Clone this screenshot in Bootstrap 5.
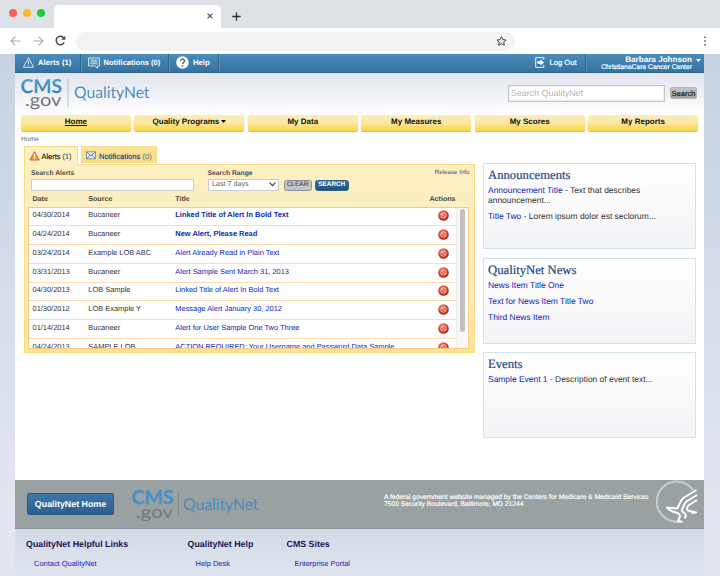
<!DOCTYPE html>
<html lang="en">
<head>
<meta charset="utf-8">
<meta name="viewport" content="width=device-width, initial-scale=1">
<title>QualityNet</title>
<link href="https://cdn.jsdelivr.net/npm/bootstrap@5.3.0/dist/css/bootstrap.min.css" rel="stylesheet">
<style>
html,body{height:576px;overflow:hidden}
body{font-family:"Liberation Sans",Arial,sans-serif;font-size:7.45px;line-height:1.2;color:#333;background:#dee1e6;text-rendering:geometricPrecision}
a{color:#0b27b8;text-decoration:none}
.tabstrip{height:28px;background:#dee1e6;padding:5px 0 0 9px}
.light{width:8.4px;height:8.4px;border-radius:50%;margin-right:5.5px}
.browser-tab{width:167px;height:23px;border-radius:5px 5px 0 0;margin-left:3.5px;padding-right:8px}
.toolbar{height:26px;padding:0 10px}
.omnibox{width:439px;height:19px;border-radius:10px;background:#f1f3f4;margin-left:10px;padding-right:8px}
.backdrop{height:522px;padding:0 16px 0 15px;background:linear-gradient(#c8d3e1,#d0dae6 30%,#dfe4ee 75%,#e3e7f0)}
.topbar{height:18.5px;background:linear-gradient(#4a8cba,#4180ae 45%,#35719e);border-bottom:1px solid #35688f;color:#fff;font-weight:700;font-size:7.5px}
.topbar>div{height:17.5px}
.sep{border-right:1px solid #2d6693;box-shadow:1px 0 #5594bf}
.org{font-size:6.75px;font-weight:400;line-height:7px;-webkit-text-stroke:.2px #fff}
.who{font-size:8.15px;line-height:8px}
.masthead{height:42px;background:linear-gradient(#e1e4ec,#f3f4f8 60%,#fff);padding:0 7px 0 5px}
.site-search{width:157px;height:17px;border:1px solid #c4c6c8;box-shadow:inset 0 0 0 .5px #dcdcdc;font-size:8.9px;color:#b5b5b5;padding-left:2px}
.grey-btn{height:11.5px;border-radius:2px;background:linear-gradient(#c4c4c4,#a4a4a4);color:#111;font-size:7.5px;border:1px solid #b5b5b5;-webkit-text-stroke:.15px #111}
.mainnav{padding:0 6px;gap:3.6px;height:17px}
.mainnav a{flex:1 1 0;height:16.5px;border-radius:2px;background:linear-gradient(#fdedbb,#fbe7a0 50%,#fbd84e 90%,#f6d450);box-shadow:0 1px 1px #c9b37e;color:#111;font-weight:700;font-size:8px;padding-bottom:2px}
.crumb{font-size:6.6px;color:#666;height:14px;padding:4px 0 0 6px;line-height:8px}
.left-col{width:451px;margin-left:9px}
.tab-row{height:18px}
.ltab{font-size:7.6px;border:1.5px solid #f7dc84;border-bottom:0}
.ltab.on{width:54px;background:#fcefc2;height:19px;position:relative;z-index:1;color:#111}
.ltab.off{width:76px;height:17px;margin-left:3px;margin-top:.5px;background:linear-gradient(#fbe39a,#f8da87);color:#22389a}
.panel{height:189px;border:1.5px solid #f8dc82;background:linear-gradient(#fcefc3,#fbecba 70%,#fbe294);padding:0 5.5px 0 3px}
.lbl{font-size:6.75px;font-weight:700;color:#4c4c4c;line-height:8px}
.field{height:11.5px;background:#fff;border:1px solid #c8cbd0}
.mini{height:10.5px;border-radius:2.5px;line-height:8.5px}
.go{background:linear-gradient(#2e76a8,#1c4f7c);border:1px solid #31618a;color:#fff;font-weight:700;font-size:6.4px}
.clr{background:#c3c6c8;border:1px solid #8d9296;color:#555;font-size:6.5px;-webkit-text-stroke:.15px #555}
.thead-line{height:14px;font-weight:700;font-size:7.1px;color:#444;padding-left:4.5px}
.c-date{width:55.8px}.c-src{width:87px}
.alert-table{height:142px;overflow:hidden;border:1px solid #f9c988}
.alert-rows{width:427px}
.arow{height:18.8px;border-bottom:1px solid #fddcb2;padding:0 7px 1.5px 3.5px;white-space:nowrap}
.arow a{font-size:7.45px}
.track{width:11px;background:#f8f8f8;border-left:1px solid #eee;padding:1.5px 0 0 2.5px}
.thumb{width:5.5px;height:123px;border-radius:3px;background:#c1c1c1}
.right-col{width:213px;gap:8.5px;margin-left:8px}
.news{height:86px;border:1px solid #d3e3ea;background:linear-gradient(#fff,#fbfbfc 40%,#f3f4f7);padding:5px 4px;font-size:8.45px;line-height:10px}
.news h2{font:400 12.7px/13px Georgia,"Liberation Serif",serif;color:#204a7c;margin:0 0 3px;-webkit-text-stroke:.2px #204a7c}
.news p{margin:0 0 6px}
.footbar{height:49px;background:#99a1a2;border-bottom:1px solid #8c989b;padding-left:12px}
.home-btn{width:87px;height:22px;border-radius:2px;border:1px solid #29587f;background:linear-gradient(#3d76a9,#2b5f92);color:#fff;font-weight:700;font-size:8.85px}
.fine{font-size:6.7px;line-height:7.4px;color:#fff;-webkit-text-stroke:.15px #fff}
.footlinks{height:47px;background:linear-gradient(#d2dae5,#e0e5ef);padding:10px 0 0 11px}
.footlinks h3{font-size:8.86px;line-height:11px;font-weight:700;color:#1d1556;margin:0 0 9px}
.footlinks a{font-size:7.46px;line-height:9px;padding-left:8px;display:block}
</style>
<script src="https://cdn.jsdelivr.net/npm/bootstrap@5.3.0/dist/js/bootstrap.bundle.min.js"></script>
</head>
<body>
<svg width="0" height="0" class="position-absolute">
  <defs>
    <linearGradient id="blue" x1="0" y1="0" x2="0" y2="1"><stop offset="0" stop-color="#56aad8"/><stop offset="1" stop-color="#2f75aa"/></linearGradient>
    <radialGradient id="red" cx=".4" cy=".3" r=".8"><stop offset="0" stop-color="#ea8571"/><stop offset=".6" stop-color="#cf3d28"/><stop offset="1" stop-color="#8e2216"/></radialGradient>
    <symbol id="ban" viewBox="0 0 11 11"><circle cx="5.5" cy="5.5" r="5.3" fill="url(#red)"/><circle cx="5.5" cy="5.5" r="2.7" fill="none" stroke="#f6c3b8" stroke-width=".9"/><path d="M3.6 3.6l3.8 3.8" stroke="#f6c3b8" stroke-width=".9"/></symbol>
  </defs>
</svg>

<div class="tabstrip d-flex">
  <div class="d-flex pt-1">
    <div class="light" style="background:#fc5b57"></div><div class="light" style="background:#fdb82c"></div><div class="light" style="background:#22c840"></div>
  </div>
  <div class="browser-tab bg-white d-flex align-items-center justify-content-end">
    <svg width="6" height="6" viewBox="0 0 6 6" style="margin-top:-1px"><path d="M.6.6l4.8 4.8M5.4.6L.6 5.4" stroke="#444" stroke-width="1.1"/></svg>
  </div>
  <svg width="9" height="9" viewBox="0 0 9 9" style="margin:6.5px 0 0 11px"><path d="M4.5.3v8.4M.3 4.5h8.4" stroke="#333" stroke-width="1.3"/></svg>
</div>
<div class="toolbar bg-white d-flex align-items-center">
  <svg width="11" height="10" viewBox="0 0 11 10" fill="none" stroke="#aaa" stroke-width="1.1"><path d="M10.5 5H1M5.3.7L1 5l4.3 4.3"/></svg>
  <svg width="11" height="10" viewBox="0 0 11 10" fill="none" stroke="#aaa" stroke-width="1.1" style="margin-left:11.5px"><path d="M.5 5H10M5.7.7L10 5 5.7 9.3"/></svg>
  <svg width="11" height="11" viewBox="0 0 11 11" style="margin-left:11.5px;margin-top:-1px"><path d="M9.2 7.2A4.2 4.2 0 1 1 8.7 2.9" fill="none" stroke="#444" stroke-width="1.4"/><path d="M10.3.8v4H6.2z" fill="#444"/></svg>
  <div class="omnibox d-flex align-items-center justify-content-end" style="margin-left:9.5px">
    <svg width="11" height="10" viewBox="0 0 11 10"><path d="M5.5.7l1.4 2.9 3.1.4-2.3 2.1.6 3.2-2.8-1.6-2.8 1.6.6-3.2L1 4l3.1-.4z" fill="none" stroke="#444" stroke-width="1"/></svg>
  </div>
  <svg class="ms-auto" width="10" height="10" viewBox="0 0 10 10" fill="#777"><circle cx="5" cy="1.2" r="1"/><circle cx="5" cy="5" r="1"/><circle cx="5" cy="8.8" r="1"/></svg>
</div>

<div class="backdrop">
<div class="bg-white h-100 d-flex flex-column">
  <div class="topbar d-flex flex-shrink-0">
    <div class="sep d-flex align-items-center" style="width:66px;padding-left:8px">
      <svg width="11" height="11" viewBox="0 0 11 11" fill="none" stroke="#fff" stroke-width=".8" stroke-linejoin="round"><path d="M5.5.8L10.6 10.3H.4z"/><path d="M5.5 3.6v3.6M5.5 8v1"/></svg>
      <span style="margin-left:4px;font-size:7.7px">Alerts (1)</span>
    </div>
    <div class="sep d-flex align-items-center" style="width:87.5px;padding-left:7px">
      <svg width="12" height="12" viewBox="0 0 12 12" fill="none" stroke="#fff" stroke-width=".8"><path d="M.6 1h10.8v8H9.5v2.3L7.2 9H.6z"/><path d="M2.5 3.2h7M2.5 5h7M2.5 6.8h7"/></svg>
      <span style="margin-left:3.5px">Notifications (0)</span>
    </div>
    <div class="sep d-flex align-items-center" style="width:50px;padding-left:7px">
      <svg width="13" height="13" viewBox="0 0 13 13"><circle cx="6.5" cy="6.5" r="6.2" fill="#fff"/><path d="M4.5 5.1a2 1.9 0 1 1 3 1.5c-.7.4-1 .7-1 1.4" fill="none" stroke="#336f9e" stroke-width="1.4"/><circle cx="6.5" cy="9.9" r=".85" fill="#336f9e"/></svg>
      <span style="margin-left:4.5px;font-size:7.7px">Help</span>
    </div>
    <div class="sep ms-auto d-flex align-items-center fw-normal" style="width:51px;font-size:7.6px">
      <svg width="10" height="11" viewBox="0 0 10 11"><path d="M8.8 3V.6H.7v9.8h8.1V8" fill="none" stroke="#fff" stroke-width=".9"/><path d="M2.4 4.2h3V2.4L9 5.5 5.4 8.6V6.8h-3z" fill="#fff"/></svg>
      <span style="margin-left:4.5px;-webkit-text-stroke:.2px #fff">Log Out</span>
    </div>
    <div class="d-flex justify-content-end" style="width:118px;padding:2px 3.5px 0 0">
      <div class="text-end"><div class="who">Barbara Johnson</div><div class="org">ChristianaCare Cancer Center</div></div>
      <svg width="5" height="3" viewBox="0 0 5 3" style="margin:3px 0 0 3.5px"><path d="M0 0h5L2.5 3z" fill="#fff"/></svg>
    </div>
  </div>

  <div class="masthead d-flex flex-shrink-0">
    <svg width="132" height="36" viewBox="0 0 132 36" style="margin-top:3px" font-family="Lato,sans-serif">
      <text x=".5" y="17" font-weight="700" font-size="19.2" textLength="41.5" lengthAdjust="spacingAndGlyphs" fill="url(#blue)">CMS</text>
      <text x="5" y="30" font-size="17.5" textLength="36.5" lengthAdjust="spacingAndGlyphs" fill="#777477">.gov</text>
      <path d="M48 3v28" stroke="#9aa0a8" stroke-width=".8" opacity=".7"/>
      <text x="54" y="22" font-size="16" textLength="75.5" lengthAdjust="spacingAndGlyphs" fill="#4f8fbd">QualityNet</text>
    </svg>
    <div class="ms-auto d-flex align-items-center" style="margin-top:-1px">
      <div class="site-search bg-white d-flex align-items-center">Search QualityNet</div>
      <div class="grey-btn d-flex align-items-center justify-content-center" style="width:27px;margin-left:5px">Search</div>
    </div>
  </div>

  <nav class="mainnav d-flex flex-shrink-0">
    <a href="#" class="d-flex align-items-center justify-content-center"><span class="text-decoration-underline">Home</span></a>
    <a href="#" class="d-flex align-items-center justify-content-center">Quality Programs<svg width="5" height="3" viewBox="0 0 5 3" style="margin-left:2px"><path d="M0 0h5L2.5 3z"/></svg></a>
    <a href="#" class="d-flex align-items-center justify-content-center">My Data</a>
    <a href="#" class="d-flex align-items-center justify-content-center">My Measures</a>
    <a href="#" class="d-flex align-items-center justify-content-center">My Scores</a>
    <a href="#" class="d-flex align-items-center justify-content-center">My Reports</a>
  </nav>
  <div class="crumb flex-shrink-0">Home</div>

  <main class="d-flex align-items-start">
    <section class="left-col flex-shrink-0">
      <div class="tab-row d-flex">
        <div class="ltab on d-flex align-items-center" style="padding-left:4px">
          <svg width="11" height="10" viewBox="0 0 11 10"><path d="M5.5.7L10.3 9H.7z" fill="#f39a35" stroke="#d96c1d" stroke-width="1" stroke-linejoin="round"/><path d="M5.5 2.8v3.4M5.5 7v1.2" stroke="#fff" stroke-width="1.2"/></svg>
          <span style="margin-left:1.5px;font-size:7.4px;white-space:nowrap;padding-top:3px;-webkit-text-stroke:.15px #111">Alerts <span class="text-secondary">(1)</span></span>
        </div>
        <div class="ltab off d-flex align-items-center" style="padding-left:4px">
          <svg width="10" height="9" viewBox="0 0 10 9"><path d="M.5.8h9v7h-9z" fill="#eef1f6" stroke="#7c8798" stroke-width=".9"/><path d="M1 1.2l4 3.6 4-3.6M1 7.4l2.8-3.2M9 7.4L6.2 4.2" fill="none" stroke="#59677e" stroke-width=".9"/></svg>
          <span style="margin-left:3px;padding-top:4px;-webkit-text-stroke:.15px #22389a">Notifications <span style="color:#666;-webkit-text-stroke:0">(0)</span></span>
        </div>
      </div>
      <div class="panel">
        <div class="d-flex" style="height:28px;padding:5.5px 0 0 3px">
          <div><div class="lbl" style="margin-bottom:1px">Search Alerts</div><div class="field" style="width:163px"></div></div>
          <div style="margin-left:13.5px"><div class="lbl" style="margin-bottom:1px">Search Range</div>
            <div class="field d-flex align-items-center justify-content-between" style="width:71.5px;font-size:7.15px;color:#666;padding:0 2.5px 0 3.5px">Last 7 days<svg width="7" height="5" viewBox="0 0 7 5"><path d="M.6.7l2.9 3 2.9-3" fill="none" stroke="#444" stroke-width="1.2"/></svg></div></div>
          <div class="d-flex" style="margin:10px 0 0 4.5px;gap:3.5px">
            <div class="mini clr text-center" style="width:28px">CLEAR</div><div class="mini go text-center" style="width:33.5px">SEARCH</div>
          </div>
          <div class="ms-auto" style="font-size:6.2px;color:#555;margin-top:-1.5px;margin-right:-1px">Release Info</div>
        </div>
        <div class="thead-line d-flex align-items-center" >
          <div class="c-date">Date</div><div class="c-src">Source</div><div>Title</div><div class="ms-auto" style="padding-right:13px">Actions</div>
        </div>
        <div class="alert-table bg-white d-flex">
          <div class="alert-rows">
            <div class="arow d-flex align-items-center"><div class="c-date">04/30/2014</div><div class="c-src">Bucaneer</div><a href="#" class="fw-bold">Linked Title of Alert In Bold Text</a><svg class="ms-auto" width="11" height="11"><use href="#ban"/></svg></div>
            <div class="arow d-flex align-items-center"><div class="c-date">04/24/2014</div><div class="c-src">Bucaneer</div><a href="#" class="fw-bold">New Alert, Please Read</a><svg class="ms-auto" width="11" height="11"><use href="#ban"/></svg></div>
            <div class="arow d-flex align-items-center"><div class="c-date">03/24/2014</div><div class="c-src">Example LOB ABC</div><a href="#">Alert Already Read in Plain Text</a><svg class="ms-auto" width="11" height="11"><use href="#ban"/></svg></div>
            <div class="arow d-flex align-items-center"><div class="c-date">03/31/2013</div><div class="c-src">Bucaneer</div><a href="#">Alert Sample Sent March 31, 2013</a><svg class="ms-auto" width="11" height="11"><use href="#ban"/></svg></div>
            <div class="arow d-flex align-items-center"><div class="c-date">04/30/2013</div><div class="c-src">LOB Sample</div><a href="#">Linked Title of Alert In Bold Text</a><svg class="ms-auto" width="11" height="11"><use href="#ban"/></svg></div>
            <div class="arow d-flex align-items-center"><div class="c-date">01/30/2012</div><div class="c-src">LOB Example Y</div><a href="#">Message Alert January 30, 2012</a><svg class="ms-auto" width="11" height="11"><use href="#ban"/></svg></div>
            <div class="arow d-flex align-items-center"><div class="c-date">01/14/2014</div><div class="c-src">Bucaneer</div><a href="#">Alert for User Sample One Two Three</a><svg class="ms-auto" width="11" height="11"><use href="#ban"/></svg></div>
            <div class="arow d-flex align-items-center"><div class="c-date">04/24/2013</div><div class="c-src">SAMPLE LOB</div><a href="#">ACTION REQUIRED: Your Username and Password Data Sample</a><svg class="ms-auto" width="11" height="11"><use href="#ban"/></svg></div>
          </div>
          <div class="track"><div class="thumb"></div></div>
        </div>
      </div>
    </section>
    <aside class="right-col d-flex flex-column flex-shrink-0" style="margin-top:17.5px">
      <div class="news"><h2>Announcements</h2><p><a href="#">Announcement Title</a> - Text that describes<br>announcement...</p><p><a href="#">Title Two</a> - Lorem ipsum dolor est seclorum...</p></div>
      <div class="news"><h2>QualityNet News</h2><p><a href="#">News Item Title One</a></p><p><a href="#">Text for News Item Title Two</a></p><p><a href="#">Third News Item</a></p></div>
      <div class="news"><h2>Events</h2><p><a href="#">Sample Event 1</a> - Description of event text...</p></div>
    </aside>
  </main>

  <footer class="mt-auto flex-shrink-0">
    <div class="footbar d-flex align-items-center">
      <div class="home-btn d-flex align-items-center justify-content-center">QualityNet Home</div>
      <svg width="132" height="36" viewBox="0 0 132 36" style="margin:1px 0 0 17px" font-family="Lato,sans-serif">
        <text x=".5" y="17" font-weight="700" font-size="19.2" textLength="42" lengthAdjust="spacingAndGlyphs" fill="#4792c4" stroke="#4792c4" stroke-width=".3">CMS</text>
        <text x="5" y="30.500" font-size="17.5" textLength="37" lengthAdjust="spacingAndGlyphs" fill="#77777a">.gov</text>
        <path d="M47.500 3v28" stroke="#7f8789" stroke-width=".9"/>
        <text x="52" y="23" font-size="16" textLength="75.5" lengthAdjust="spacingAndGlyphs" fill="#4a8cba">QualityNet</text>
      </svg>
      <div class="fine" style="margin:-6px 0 0 121px;white-space:nowrap">A federal government website managed by the Centers for Medicare &amp; Medicaid Services<br>7500 Security Boulevard, Baltimore, MD 21244</div>
      <svg class="ms-auto" width="48" height="48" viewBox="0 0 48 48" fill="none" stroke="#fff">
        <path d="M23 41.500A20 20 0 1 1 37 10" stroke="#d0d5d6" stroke-width="2.200" stroke-dasharray="1.7 .35"/>
        <path d="M40.500 10L28 17.500C23.500 21 24 25 21 28.500L11 27.500C16 34 20.500 31 23.500 34.500C25.500 37 21.500 38.500 22.500 41.500H26.500M41 15L30.500 21.500C27 24.500 28 27.500 25.500 30.500M41 20L33 25C30 27.500 30.500 31 34 31L40 32.500L35.500 33M25.500 30.500C29 34.500 31.500 33.500 28.500 38.500" stroke-width="2" stroke-linejoin="round"/>
      </svg>
    </div>
    <div class="footlinks d-flex">
      <div style="width:161.5px"><h3>QualityNet Helpful Links</h3><a href="#">Contact QualityNet</a></div>
      <div style="width:99px"><h3>QualityNet Help</h3><a href="#">Help Desk</a></div>
      <div><h3>CMS Sites</h3><a href="#">Enterprise Portal</a></div>
    </div>
  </footer>
</div>
</div>
</body>
</html>
